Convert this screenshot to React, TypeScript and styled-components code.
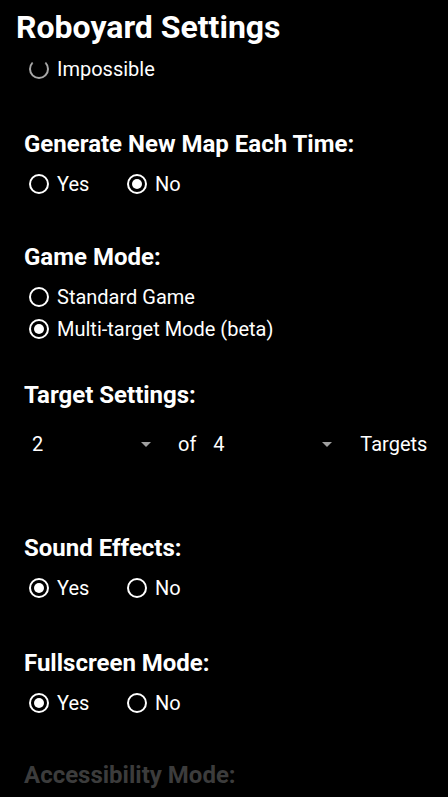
import React from 'react';
import styled, { createGlobalStyle } from 'styled-components';

const GlobalStyle = createGlobalStyle`
  html, body {
    margin: 0;
    padding: 0;
    background: #000;
  }

  body {
    font-family: Roboto, "Noto Sans", "Liberation Sans", sans-serif;
    color: #fff;
  }
`;

const Screen = styled.div`
  width: 448px;
  height: 797px;
  overflow: hidden;
  background: #000;
`;

const Header = styled.header`
  padding: 7px 16px 0;
  height: 47px;
  box-sizing: border-box;
`;

const Title = styled.h1`
  margin: 0;
  font-size: 32px;
  line-height: 40px;
  font-weight: 700;
  color: #fff;
`;

const Content = styled.main`
  display: flex;
  flex-direction: column;
  padding: 0 24px;
`;

const Section = styled.section<{ $top: number }>`
  display: flex;
  flex-direction: column;
  margin-top: ${props => props.$top}px;
`;

const Heading = styled.h2<{ $dim?: boolean }>`
  margin: 0 0 10px;
  font-size: 24px;
  line-height: 28px;
  font-weight: 700;
  color: ${props => (props.$dim ? '#3c3c3c' : '#fff')};
`;

const RadioGroup = styled.div<{ $row?: boolean; $top?: number }>`
  display: flex;
  flex-direction: ${props => (props.$row ? 'row' : 'column')};
  margin-top: ${props => props.$top ?? 0}px;
  padding-left: 5px;
`;

const RadioOption = styled.label<{ $row?: boolean }>`
  display: flex;
  align-items: center;
  gap: 8px;
  height: 32px;
  min-width: ${props => (props.$row ? '98px' : 'auto')};
  font-size: 20px;
  color: #fff;
`;

const Circle = styled.span<{ $checked?: boolean; $faded?: boolean }>`
  position: relative;
  display: block;
  flex: none;
  width: 20px;
  height: 20px;
  box-sizing: border-box;
  border-radius: 50%;
  border: 2px solid ${props => (props.$faded ? '#a8a8a8' : '#fff')};
  ${props => props.$faded && 'border-top-color: transparent;'}

  &::after {
    content: '';
    display: ${props => (props.$checked ? 'block' : 'none')};
    position: absolute;
    left: 3px;
    top: 3px;
    width: 10px;
    height: 10px;
    border-radius: 50%;
    background: #fff;
  }
`;

const SpinnerRow = styled.div`
  display: flex;
  align-items: center;
  height: 50px;
  font-size: 20px;
  color: #fff;
`;

const Spinner = styled.div`
  display: flex;
  flex: none;
  align-items: center;
  justify-content: space-between;
  width: 136px;
  height: 40px;
  padding: 0 9px 0 8px;
  box-sizing: border-box;
`;

const Caret = styled.span`
  width: 0;
  height: 0;
  border-left: 5px solid transparent;
  border-right: 5px solid transparent;
  border-top: 5px solid #a0a0a0;
`;

const Word = styled.span<{ $left: number; $right?: number }>`
  flex: none;
  margin: 0 ${props => props.$right ?? 0}px 0 ${props => props.$left}px;
`;

interface RadioProps {
  label: string;
  checked?: boolean;
  row?: boolean;
  faded?: boolean;
}

const Radio: React.FC<RadioProps> = ({ label, checked, row, faded }) => (
  <RadioOption $row={row}>
    <Circle $checked={checked} $faded={faded} />
    {label}
  </RadioOption>
);

const YesNo: React.FC<{ yes: boolean }> = ({ yes }) => (
  <RadioGroup $row>
    <Radio row label="Yes" checked={yes} />
    <Radio row label="No" checked={!yes} />
  </RadioGroup>
);

const App: React.FC = () => (
  <Screen>
    <GlobalStyle />
    <Header>
      <Title>Roboyard Settings</Title>
    </Header>
    <Content>
      {/* tail of the difficulty list, scrolled up under the title */}
      <RadioGroup $top={6}>
        <Radio label="Impossible" faded />
      </RadioGroup>

      <Section $top={45}>
        <Heading>Generate New Map Each Time:</Heading>
        <YesNo yes={false} />
      </Section>

      <Section $top={43}>
        <Heading>Game Mode:</Heading>
        <RadioGroup>
          <Radio label="Standard Game" />
          <Radio label="Multi-target Mode (beta)" checked />
        </RadioGroup>
      </Section>

      <Section $top={36}>
        <Heading>Target Settings:</Heading>
        <SpinnerRow>
          <Spinner>
            2<Caret />
          </Spinner>
          <Word $left={18} $right={9}>
            of
          </Word>
          <Spinner>
            4<Caret />
          </Spinner>
          <Word $left={19}>Targets</Word>
        </SpinnerRow>
      </Section>

      <Section $top={65}>
        <Heading>Sound Effects:</Heading>
        <YesNo yes />
      </Section>

      <Section $top={45}>
        <Heading>Fullscreen Mode:</Heading>
        <YesNo yes />
      </Section>

      <Section $top={42}>
        <Heading $dim>Accessibility Mode:</Heading>
      </Section>
    </Content>
  </Screen>
);

export default App;
